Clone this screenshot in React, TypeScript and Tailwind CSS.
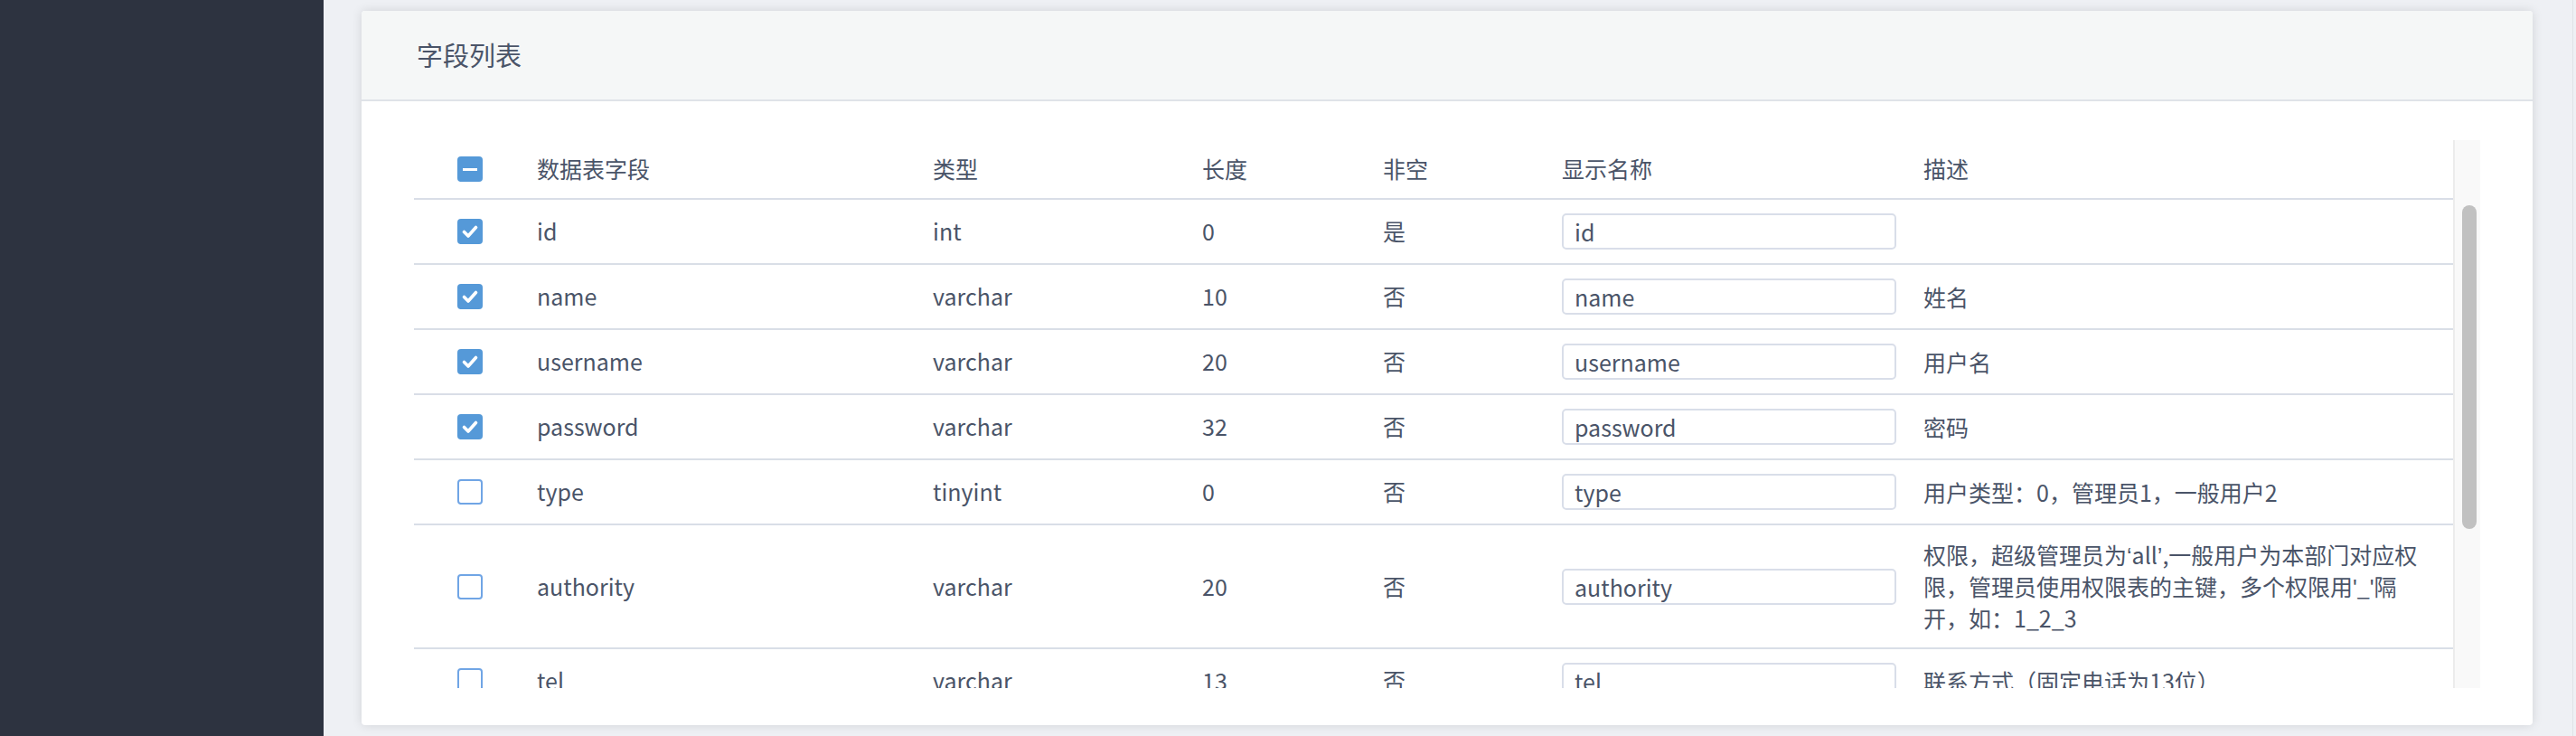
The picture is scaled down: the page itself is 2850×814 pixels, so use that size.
import type { ReactNode } from 'react';

type Field = {
  name: string;
  type: string;
  length: string;
  notNull: string;
  desc: ReactNode[];
  checked: boolean;
};

// Latin quotes render full-width in the CJK font, keep them narrow
const Q = ({ c }: { c: string }) => <span className="font-['Liberation_Sans',sans-serif] leading-none">{c}</span>;

const fields: Field[] = [
  { name: 'id', type: 'int', length: '0', notNull: '是', desc: [], checked: true },
  { name: 'name', type: 'varchar', length: '10', notNull: '否', desc: ['姓名'], checked: true },
  { name: 'username', type: 'varchar', length: '20', notNull: '否', desc: ['用户名'], checked: true },
  { name: 'password', type: 'varchar', length: '32', notNull: '否', desc: ['密码'], checked: true },
  {
    name: 'type',
    type: 'tinyint',
    length: '0',
    notNull: '否',
    desc: ['用户类型：0，管理员1，一般用户2'],
    checked: false,
  },
  {
    name: 'authority',
    type: 'varchar',
    length: '20',
    notNull: '否',
    desc: [
      <>
        权限，超级管理员为<Q c="‘" />all<Q c="’" />,一般用户为本部门对应权
      </>,
      <>
        限，管理员使用权限表的主键，多个权限用<Q c="'" />_<Q c="'" />隔
      </>,
      '开，如：1_2_3',
    ],
    checked: false,
  },
  {
    name: 'tel',
    type: 'varchar',
    length: '13',
    notNull: '否',
    desc: ['联系方式（固定电话为13位）'],
    checked: false,
  },
];

const cols = 'grid grid-cols-[136px_438px_298px_200px_198px_400px_1fr]';

function Checkbox({ state }: { state: 'on' | 'off' | 'some' }) {
  if (state === 'off') {
    return <span className="block h-[28px] w-[28px] rounded-[4px] border-2 border-[#70a5e5] bg-white" />;
  }
  return (
    <span className="flex h-[28px] w-[28px] items-center justify-center rounded-[4px] bg-[#5599d8]">
      {state === 'some' ? (
        <span className="block h-[3px] w-[16px] bg-white" />
      ) : (
        <svg width="28" height="28" viewBox="0 0 28 28">
          <path
            d="M7.5 14.5 L12 19 L20.5 9.5"
            fill="none"
            stroke="#fff"
            strokeWidth="3.6"
            strokeLinecap="round"
            strokeLinejoin="round"
          />
        </svg>
      )}
    </span>
  );
}

function Row({ f }: { f: Field }) {
  return (
    <div className={`${cols} items-center border-b-2 border-[#d9dee7] py-[15px]`}>
      <div className="pl-[48px]">
        <Checkbox state={f.checked ? 'on' : 'off'} />
      </div>
      <div>{f.name}</div>
      <div>{f.type}</div>
      <div>{f.length}</div>
      <div>{f.notNull}</div>
      <div>
        <input
          readOnly
          value={f.name}
          className="h-[40px] w-[370px] rounded-[5px] border-2 border-[#d9dee9] bg-white px-[12px] text-[25px] text-[#4a5468] outline-none"
        />
      </div>
      <div className="leading-[35px]">
        {f.desc.map((line, i) => (
          <div key={i} className="whitespace-nowrap">
            {line}
          </div>
        ))}
      </div>
    </div>
  );
}

export default function App() {
  return (
    <div className="flex h-[814px] w-[2850px] bg-[#eef0f4] font-['Noto_Sans_CJK_SC','Noto_Sans',sans-serif] text-[25px] text-[#4a5468]">
      <aside className="w-[358px] shrink-0 bg-[#2d3340]" />
      <main className="flex-1 py-[12px] pl-[42px] pr-[44px]">
        <section className="flex h-[790px] flex-col overflow-hidden rounded-[4px] bg-white shadow-[0_0_12px_rgba(0,0,0,0.12)]">
          <header className="flex h-[100px] shrink-0 items-center border-b-2 border-[#dfe3e8] bg-[#f5f7f7] pl-[61px]">
            <h2 className="text-[29px] font-normal">字段列表</h2>
          </header>
          <div className="flex-1 px-[58px] pb-[41px] pt-[43px]">
            <div className="flex h-[606px] flex-col">
              <div className="flex h-[66px] shrink-0">
                <div className={`${cols} w-[2256px] items-center border-b-2 border-[#d9dee7]`}>
                  <div className="pl-[48px]">
                    <Checkbox state="some" />
                  </div>
                  <div>数据表字段</div>
                  <div>类型</div>
                  <div>长度</div>
                  <div>非空</div>
                  <div>显示名称</div>
                  <div>描述</div>
                </div>
                <div className="w-[30px] border-l-2 border-[#ececec] bg-[#f9f9f9]" />
              </div>
              <div className="flex h-[540px]">
                <div className="w-[2256px] overflow-hidden">
                  {fields.map((f) => (
                    <Row key={f.name} f={f} />
                  ))}
                </div>
                <div className="w-[30px] border-l-2 border-[#ececec] bg-[#f9f9f9] pl-[8px] pt-[6px]">
                  <div className="h-[358px] w-[16px] rounded-full bg-[#c1c1c1]" />
                </div>
              </div>
            </div>
          </div>
        </section>
      </main>
      <div className="w-[4px] border-l border-[#dfe2e6]" />
    </div>
  );
}
